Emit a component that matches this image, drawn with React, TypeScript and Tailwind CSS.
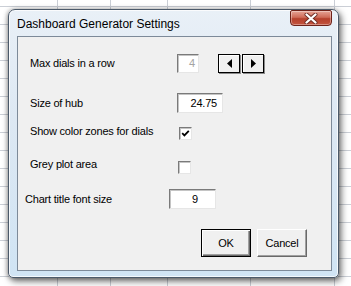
import React from "react";

const sunken =
  "bg-white border border-t-[#7a7a7a] border-l-[#7a7a7a] border-r-[#e6e6e6] border-b-[#e6e6e6] shadow-[inset_1px_1px_0_#c4c4c4]";

const TextBox: React.FC<{ value: string; className: string; disabled?: boolean }> = ({
  value,
  className,
  disabled,
}) => (
  <div className={`${sunken} flex items-center ${className} ${disabled ? "text-[#a3a3a3]" : "text-black"}`}>
    {value}
  </div>
);

const CheckBox: React.FC<{ checked?: boolean }> = ({ checked }) => (
  <div className={`${sunken} w-[13px] h-[13px] flex items-center justify-center`}>
    {checked && (
      <svg width="9" height="9" viewBox="0 0 9 9">
        <path d="M1.2 4.2 L3.4 6.4 L7.8 1.8" fill="none" stroke="#000" strokeWidth="1.8" />
      </svg>
    )}
  </div>
);

const SpinButton: React.FC<{ dir: "left" | "right" }> = ({ dir }) => (
  <div className="w-[22px] h-[19px] bg-[#f0f0f0] border border-black shadow-[1px_1px_0_#8a8a8a,inset_1px_1px_0_#ffffff] flex items-center justify-center">
    <svg width="5" height="9" viewBox="0 0 5 9">
      <path d={dir === "left" ? "M5 0 L0 4.5 L5 9 Z" : "M0 0 L5 4.5 L0 9 Z"} fill="#000" />
    </svg>
  </div>
);

const Button: React.FC<{ label: string; primary?: boolean }> = ({ label, primary }) => (
  <div
    className={`w-[50px] h-[28px] bg-[#f0f0f0] flex items-center justify-center text-[11px] border ${
      primary
        ? "border-black shadow-[inset_1px_1px_0_#ffffff,inset_-1px_-1px_0_#696969,inset_-2px_-2px_0_#a0a0a0]"
        : "border-t-white border-l-white border-r-[#696969] border-b-[#696969] shadow-[inset_-1px_-1px_0_#a0a0a0]"
    }`}
  >
    {label}
  </div>
);

export default function App() {
  return (
    <div
      className="w-[351px] h-[286px] overflow-hidden bg-white pt-[9px] pl-[8px] font-['Liberation_Sans',Arial,sans-serif] text-black
        bg-[linear-gradient(to_bottom,#cbcfd6_1px,transparent_1px),linear-gradient(to_right,transparent_57px,#cbcfd6_57px_58px,transparent_58px_110px,#cbcfd6_110px_111px,transparent_111px_167px,#cbcfd6_167px_168px,transparent_168px_250px,#cbcfd6_250px_251px,transparent_251px_334px,#cbcfd6_334px_335px,transparent_335px)]
        bg-[size:100%_18px,100%_100%] bg-[position:0_6px,0_0]"
    >
      {/* window */}
      <div className="w-[331px] h-[269px] flex flex-col rounded-t-[7px] rounded-b-[5px] border border-[#4c5a6a] bg-[linear-gradient(to_bottom,#e9f0f7,#dde8f3_40%,#d0e4f4)] shadow-[2px_3px_7px_rgba(0,0,0,0.6),-1px_0_4px_rgba(0,0,0,0.25),inset_0_0_0_1px_rgba(255,255,255,0.75)] pl-[8px] pr-[6px] pb-[6px]">
        <div className="h-[26px] flex justify-between items-start shrink-0">
          <div className="text-[12px] leading-[14px] pt-[7px]">Dashboard Generator Settings</div>
          <div className="w-[42px] h-[16px] rounded-b-[4px] rounded-t-[2px] border border-[#6e2219] bg-[linear-gradient(to_bottom,#e6a496,#cf6b58_45%,#b5402c_55%,#c4553f)] shadow-[inset_0_0_0_1px_rgba(255,255,255,0.35)] flex items-center justify-center">
            <svg width="14" height="11" viewBox="0 0 14 11">
              <path d="M2.5 1.5 L11.5 9.5 M11.5 1.5 L2.5 9.5" stroke="#6a2a22" strokeWidth="4" strokeLinecap="round" />
              <path d="M2.5 1.5 L11.5 9.5 M11.5 1.5 L2.5 9.5" stroke="#ffffff" strokeWidth="2.3" strokeLinecap="round" />
            </svg>
          </div>
        </div>

        {/* client area */}
        <div className="flex-1 border border-[#7d8a99] bg-[#f0f0f0] flex flex-col text-[11px] leading-[13px] tracking-[-0.2px]">
          <div className="mt-[17px] h-[19px] flex items-center">
            <div className="w-[159px] pl-[12px]">Max dials in a row</div>
            <TextBox value="4" disabled className="w-[22px] h-[19px] justify-end pr-[3px]" />
            <div className="ml-[19px] flex gap-[2px]">
              <SpinButton dir="left" />
              <SpinButton dir="right" />
            </div>
          </div>

          <div className="mt-[20px] h-[20px] flex items-center">
            <div className="w-[159px] pl-[12px]">Size of hub</div>
            <TextBox value="24.75" className="w-[46px] h-[20px] justify-end pr-[5px]" />
          </div>

          <div className="mt-[14px] h-[13px] flex items-start">
            <div className="w-[161px] pl-[12px] -mt-[2px]">Show color zones for dials</div>
            <CheckBox checked />
          </div>

          <div className="mt-[21px] h-[13px] flex items-start">
            <div className="w-[160px] pl-[12px] -mt-[3px]">Grey plot area</div>
            <CheckBox />
          </div>

          <div className="mt-[15px] h-[20px] flex items-center">
            <div className="w-[151px] pl-[7px]">Chart title font size</div>
            <TextBox value="9" className="w-[47px] h-[20px] justify-center pl-[5px]" />
          </div>

          <div className="mt-[20px] flex justify-end gap-[6px] pr-[24px]">
            <Button label="OK" primary />
            <Button label="Cancel" />
          </div>
        </div>
      </div>
    </div>
  );
}
